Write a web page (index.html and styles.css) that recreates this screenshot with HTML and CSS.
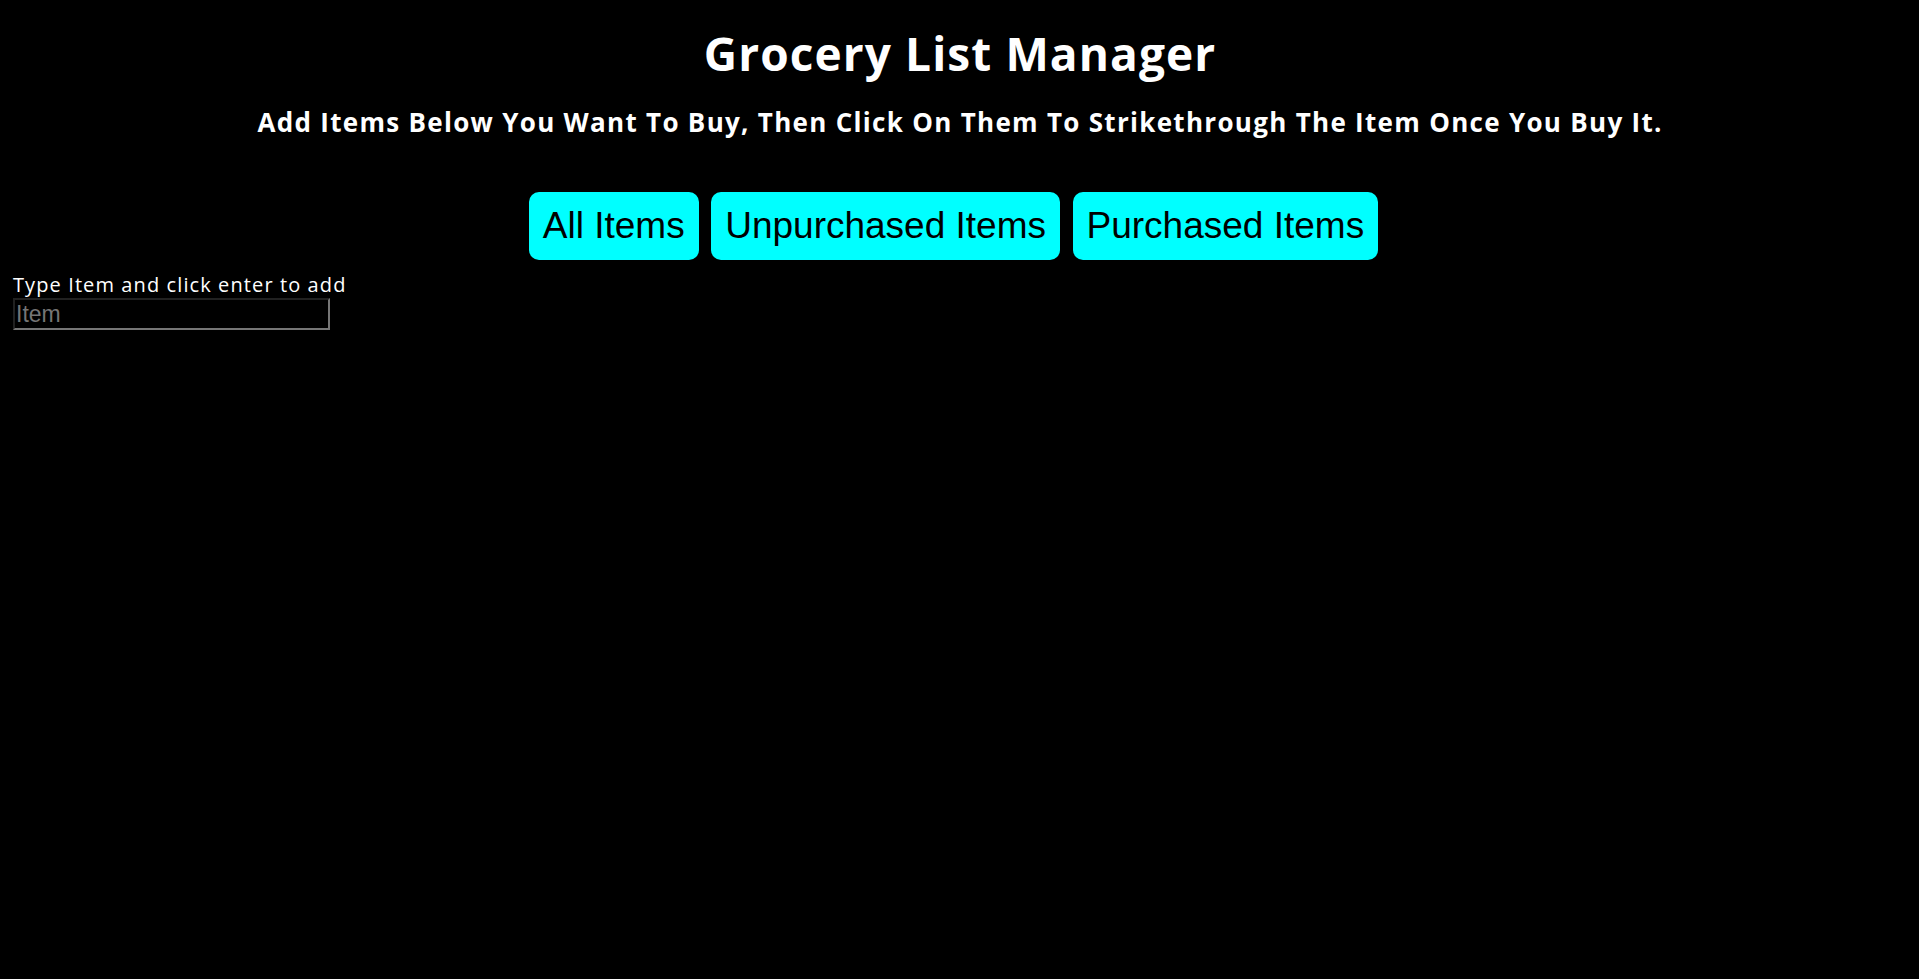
FILE: index.html
```html
<!DOCTYPE html>
<html lang="en">
<head>
<meta charset="utf-8">
<title>Grocery List Manager</title>
<link rel="stylesheet" href="styles.css">
</head>
<body>
<header class="header">
  <h1 class="title">Grocery List Manager</h1>
  <h3 class="subtitle">Add Items Below You Want To Buy, Then Click On Them To Strikethrough The Item Once You Buy It.</h3>
</header>
<nav class="filters">
  <button class="filter-btn">All Items</button>
  <button class="filter-btn">Unpurchased Items</button>
  <button class="filter-btn">Purchased Items</button>
</nav>
<form class="add-form">
  <label class="add-label" for="item">Type Item and click enter to add</label>
  <input class="add-input" id="item" type="text" placeholder="Item">
</form>
</body>
</html>
```
FILE: styles.css
```css
html, body {
  background: #000;
}
body {
  margin: 0;
  padding: 0 13px;
  color: #fff;
  font-family: "Open Sans", Lato, sans-serif;
}
.header {
  text-align: center;
}
.title {
  margin: 25px 0 0;
  font-size: 46px;
  line-height: 56px;
  font-weight: 700;
  letter-spacing: 1.1px;
  text-indent: 1.1px;
}
.subtitle {
  margin: 26px 0 0;
  font-size: 26px;
  line-height: 30px;
  font-weight: 700;
  letter-spacing: 1.3px;
  text-indent: 1.3px;
}
.filters {
  display: flex;
  justify-content: center;
  gap: 12.5px;
  margin-top: 55px;
  padding-right: 12px;
}
.filter-btn {
  background: #00ffff;
  color: #000;
  border: none;
  border-radius: 10px;
  font-family: "Liberation Sans", Arial, sans-serif;
  font-size: 37px;
  line-height: 42px;
  padding: 13px 14px;
  cursor: pointer;
}
.add-form {
  display: flex;
  flex-direction: column;
  align-items: flex-start;
  margin-top: 13px;
}
.add-label {
  font-size: 20px;
  line-height: 24px;
  letter-spacing: 1.1px;
}
.add-input {
  margin-top: 1px;
  box-sizing: border-box;
  width: 317px;
  height: 32px;
  background: #000;
  color: #fff;
  border: 2px inset #767676;
  padding: 0 1px;
  font-family: "Liberation Sans", Arial, sans-serif;
  font-size: 23px;
}
.add-input::placeholder {
  color: #757575;
}
```
